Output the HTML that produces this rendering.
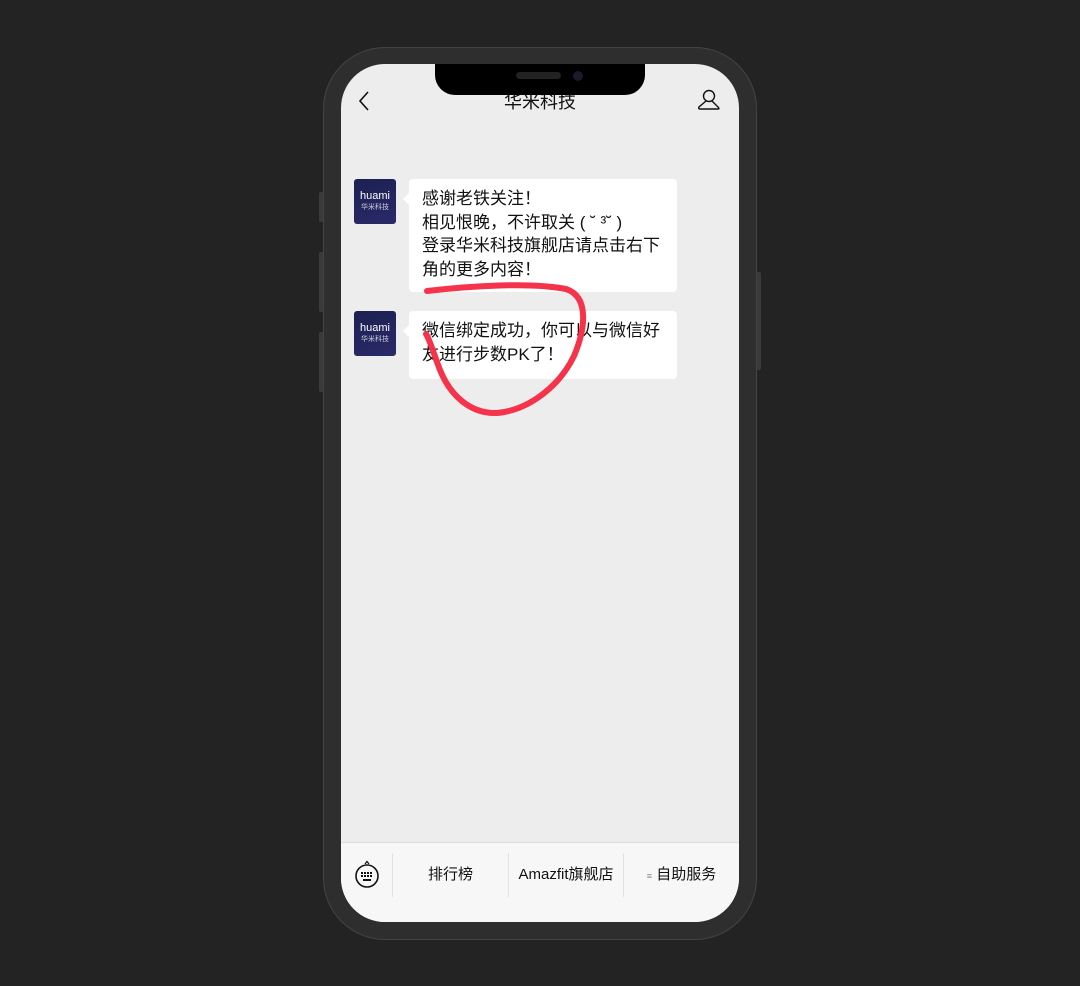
<!DOCTYPE html>
<html><head><meta charset="utf-8"><style>
body{margin:0;width:1080px;height:986px;background:#232323;position:relative;overflow:hidden;font-family:"Liberation Sans","Noto Sans CJK SC",sans-serif;}
.btn{position:absolute;background:#3a3a3a;border-radius:2px;}
.phone{position:absolute;left:323px;top:47px;width:434px;height:893px;border-radius:62px;background:#2e2e2e;border:1px solid #444;box-sizing:border-box;}
.screen{position:absolute;left:341px;top:64px;width:398px;height:858px;border-radius:44px;background:#ededed;overflow:hidden;}
.notch{position:absolute;left:94px;top:0;width:210px;height:31px;background:#000;border-radius:0 0 20px 20px;}
.title{position:absolute;top:24px;left:0;width:100%;text-align:center;font-size:18px;color:#111;}
.av{position:absolute;left:13px;width:42px;height:45px;border-radius:3px;background:linear-gradient(160deg,#1c2050,#2a2a6a);color:#fff;text-align:center;}
.av b{display:block;font-size:11px;font-weight:normal;margin-top:11px;}
.av i{display:block;font-size:7px;font-style:normal;color:#ccd;}
.bub{position:absolute;left:68px;width:268px;background:#fff;border-radius:4px;font-size:17px;line-height:23.5px;color:#111;padding:8px 12px 8px 13px;box-sizing:border-box;}
.bub:before{content:"";position:absolute;left:-6px;top:14px;border:6px solid transparent;border-right-color:#fff;border-left:0;}
.bar{position:absolute;left:0;top:778px;width:100%;height:80px;background:#f7f7f7;border-top:1px solid #ddd;}
.it{position:absolute;top:20px;height:44px;line-height:23px;font-size:15px;color:#111;text-align:center;}
.sep{position:absolute;top:10px;width:1px;height:44px;background:#e2e2e2;}
</style></head><body>
<div class="btn" style="left:319px;top:192px;width:5px;height:30px"></div>
<div class="btn" style="left:319px;top:252px;width:5px;height:60px"></div>
<div class="btn" style="left:319px;top:332px;width:5px;height:60px"></div>
<div class="btn" style="left:756px;top:272px;width:5px;height:98px"></div>
<div class="phone"></div>
<div class="screen">
<div class="title">华米科技</div>
<div class="notch"><div style="position:absolute;left:81px;top:8px;width:45px;height:7px;border-radius:4px;background:#222"></div><div style="position:absolute;left:138px;top:7px;width:10px;height:10px;border-radius:50%;background:#1a1a2a"></div></div>
<svg style="position:absolute;left:16px;top:26px" width="14" height="22"><path d="M11 2 L3 11 L11 20" stroke="#111" stroke-width="1.6" fill="none"/></svg>
<svg style="position:absolute;left:356px;top:24px" width="24" height="24"><circle cx="12" cy="8" r="5.5" stroke="#111" stroke-width="1.4" fill="none"/><path d="M9 13 L2 19 Q1 21 3 21 L21 21 Q23 21 21 19 L15 13" stroke="#111" stroke-width="1.4" fill="none"/></svg>
<div class="av" style="top:115px"><b>huami</b><i>华米科技</i></div>
<div class="bub" style="top:115px;height:113px">感谢老铁关注！<br>相见恨晚，不许取关 ( ˘ ³˘ )<br>登录华米科技旗舰店请点击右下角的更多内容！</div>
<div class="av" style="top:247px"><b>huami</b><i>华米科技</i></div>
<div class="bub" style="top:247px;height:68px">微信绑定成功，你可以与微信好友进行步数PK了！</div>
<div class="bar">
<svg style="position:absolute;left:13px;top:17px" width="26" height="30"><path d="M11 4 L13 1.5 L15 4" stroke="#111" stroke-width="1.2" fill="none"/><circle cx="13" cy="16" r="11" stroke="#111" stroke-width="1.6" fill="none"/><g fill="#111"><rect x="7" y="12" width="2" height="2"/><rect x="10" y="12" width="2" height="2"/><rect x="13" y="12" width="2" height="2"/><rect x="16" y="12" width="2" height="2"/><rect x="7" y="15" width="2" height="2"/><rect x="10" y="15" width="2" height="2"/><rect x="13" y="15" width="2" height="2"/><rect x="16" y="15" width="2" height="2"/><rect x="9" y="19" width="8" height="2"/></g></svg>
<div class="sep" style="left:51px"></div><div class="sep" style="left:167px"></div><div class="sep" style="left:282px"></div>
<div class="it" style="left:52px;width:115px">排行榜</div>
<div class="it" style="left:168px;width:114px">Amazfit旗舰店</div>
<div class="it" style="left:283px;width:115px"><span style="font-size:9px;color:#888">≡</span> 自助服务</div>
</div>
</div>
<svg style="position:absolute;left:0;top:0" width="1080" height="986"><path d="M427 291 C470 286 530 282 566 289 C590 297 585 330 574 356 C560 385 530 410 497 413 C470 414 450 395 440 370 C433 352 430 340 426 334" stroke="#f5334a" stroke-width="6" fill="none" stroke-linecap="round"/></svg>
</body></html>
